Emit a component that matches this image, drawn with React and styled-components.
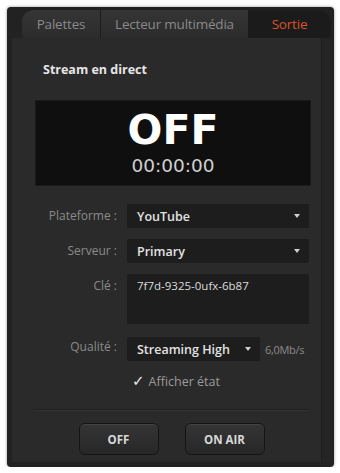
import React from "react";
import styled, { createGlobalStyle } from "styled-components";

const Global = createGlobalStyle`
  body {
    margin: 0;
    background: #ffffff;
    font-family: "Open Sans", "Liberation Sans", sans-serif;
  }
`;

const Frame = styled.div`
  position: relative;
  margin: 7px 0 0 7px;
  width: 327px;
  height: 460px;
  box-sizing: border-box;
  background: #222222;
  border-radius: 4px;
  box-shadow: 0 0 3px rgba(0, 0, 0, 0.45);
  padding: 3px 3px 5px 5px;
  display: flex;
  flex-direction: column;
`;

const TabBar = styled.div`
  display: flex;
  height: 28px;
  margin-left: 10px;
  background: linear-gradient(#353535, #2c2c2c);
  border-radius: 12px 12px 4px 4px;
  overflow: hidden;
`;

const Tab = styled.div`
  display: flex;
  align-items: center;
  justify-content: center;
  width: ${(p) => p.w}px;
  font-size: 13.5px;
  color: ${(p) => (p.active ? "#d9532c" : "#8a8a8a")};
  background: ${(p) => (p.active ? "#1b1b1b" : "transparent")};
  border-right: ${(p) => (p.divider ? "1px solid #1c1c1c" : "none")};
  letter-spacing: -0.2px;
`;

const Body = styled.div`
  flex: 1;
  display: flex;
  background: #2a2a2a;
`;

const Panel = styled.div`
  flex: 1;
  display: flex;
  flex-direction: column;
  padding: 0 12px 0 22px;
`;

const ScrollTrack = styled.div`
  width: 9px;
  background: #242424;
  border-left: 1px solid #1c1c1c;
`;

const Heading = styled.div`
  color: #e6e6e6;
  font-size: 12.5px;
  font-weight: 700;
  padding: 23px 0 0 9px;
  height: 26px;
`;

const Display = styled.div`
  margin: 13px -2px 0 1px;
  height: 86px;
  background: #0f0f0f;
  display: flex;
  flex-direction: column;
  align-items: center;
  box-shadow: inset 0 0 0 1px #1a1a1a;
`;

const BigState = styled.div`
  color: #ffffff;
  font-family: "DejaVu Sans", "Open Sans", sans-serif;
  font-weight: 700;
  font-size: 41px;
  line-height: 1;
  margin-top: 10px;
`;

const Timer = styled.div`
  color: #cfcfcf;
  font-family: "DejaVu Sans", sans-serif;
  font-size: 18.5px;
  line-height: 1;
  margin-top: 6px;
`;

const Form = styled.div`
  display: grid;
  grid-template-columns: 83px 1fr;
  column-gap: 10px;
  row-gap: 11px;
  margin-top: 18px;
  align-items: start;
`;

const Label = styled.div`
  color: #8a8a8a;
  font-size: 12px;
  text-align: right;
  line-height: 24px;
`;

const Select = styled.div`
  display: flex;
  align-items: center;
  justify-content: space-between;
  height: 24px;
  padding: 0 9px 0 10px;
  background: #1d1d1d;
  border-radius: 2px;
  color: #e2e2e2;
  font-size: 12.5px;
  font-weight: 600;
  width: ${(p) => (p.w ? `${p.w}px` : "auto")};
  box-sizing: border-box;
`;

const Arrow = styled.span`
  width: 0;
  height: 0;
  border-left: 3px solid transparent;
  border-right: 3px solid transparent;
  border-top: 4px solid #d0d0d0;
`;

const KeyField = styled.div`
  height: 50px;
  background: #1d1d1d;
  border-radius: 2px;
  padding: 4px 10px;
  box-sizing: border-box;
  color: #dcdcdc;
  font-size: 11.5px;
`;

const Inline = styled.div`
  display: flex;
  align-items: center;
  gap: 5px;
  margin-top: 2px;
`;

const Rate = styled.span`
  color: #8a8a8a;
  font-size: 11px;
  letter-spacing: -0.3px;
`;

const Check = styled.div`
  display: flex;
  align-items: center;
  gap: 4px;
  color: #9a9a9a;
  font-size: 12.5px;
  margin-top: 0;
  padding-left: 5px;
`;

const Tick = styled.span`
  color: #e8e8e8;
  font-size: 15px;
  font-family: "DejaVu Sans", sans-serif;
`;

const Footer = styled.div`
  margin-top: auto;
  border-top: 1px solid #1e1e1e;
  box-shadow: 0 1px 0 #333333 inset;
  display: flex;
  justify-content: center;
  gap: 26px;
  padding: 13px 0 7px 0;
`;

const Button = styled.div`
  width: 80px;
  height: 32px;
  box-sizing: border-box;
  border-radius: 6px;
  background: linear-gradient(#353535, #272727);
  border: 1px solid #141414;
  box-shadow: inset 0 1px 0 #444444;
  display: flex;
  align-items: center;
  justify-content: center;
  color: #d8d8d8;
  font-size: 11.5px;
  font-weight: 700;
`;

export default function App() {
  return (
    <>
      <Global />
      <Frame>
        <TabBar>
          <Tab w={78} divider>Palettes</Tab>
          <Tab w={147}>Lecteur multimédia</Tab>
          <Tab w={83} active>Sortie</Tab>
        </TabBar>
        <Body>
          <Panel>
            <Heading>Stream en direct</Heading>
            <Display>
              <BigState>OFF</BigState>
              <Timer>00:00:00</Timer>
            </Display>
            <Form>
              <Label>Plateforme :</Label>
              <Select>
                YouTube
                <Arrow />
              </Select>
              <Label>Serveur :</Label>
              <Select>
                Primary
                <Arrow />
              </Select>
              <Label>Clé :</Label>
              <KeyField>7f7d-9325-0ufx-6b87</KeyField>
              <Label>Qualité :</Label>
              <Inline>
                <Select w={133}>
                  Streaming High
                  <Arrow />
                </Select>
                <Rate>6,0Mb/s</Rate>
              </Inline>
              <div />
              <Check>
                <Tick>✓</Tick>
                Afficher état
              </Check>
            </Form>
            <Footer>
              <Button>OFF</Button>
              <Button>ON AIR</Button>
            </Footer>
          </Panel>
          <ScrollTrack />
        </Body>
      </Frame>
    </>
  );
}
